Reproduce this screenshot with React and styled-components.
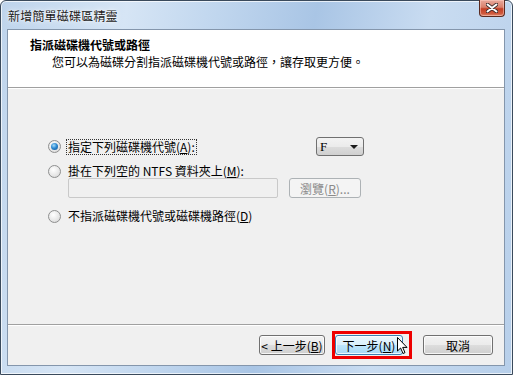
import React from 'react';
import styled, { createGlobalStyle } from 'styled-components';

const GlobalStyle = createGlobalStyle`
  html, body {
    margin: 0;
    padding: 0;
    background: #ffffff;
  }
  body {
    font-family: "Noto Sans CJK TC", "Liberation Sans", sans-serif;
    font-size: 12px;
    color: #000;
  }
`;

const Window = styled.div`
  position: relative;
  box-sizing: border-box;
  width: 513px;
  height: 375px;
  border: 1px solid #3a4a5c;
  border-radius: 6px 6px 0 0;
  background: linear-gradient(100deg, #bed4ec 0%, #d6e5f5 22%, #c0d6ee 38%, #a9c5e5 55%, #c9dcf1 75%, #b7cfea 100%);
  box-shadow: inset 0 0 0 1px rgba(255, 255, 255, 0.7);
  display: flex;
  flex-direction: column;
  padding: 0 7px 8px 6px;
`;

const TitleBar = styled.div`
  height: 28px;
  display: flex;
  align-items: center;
  padding-left: 1px;
`;

const Caption = styled.span`
  font-size: 12px;
  color: #1a1a1a;
  text-shadow: 0 0 6px rgba(255, 255, 255, 0.95), 0 0 2px #fff;
  letter-spacing: 0.2px;
`;

const CloseButton = styled.div`
  position: absolute;
  top: -1px;
  right: 7px;
  width: 26px;
  height: 17px;
  box-sizing: border-box;
  border: 1px solid #5a2a20;
  border-top: none;
  border-radius: 0 0 4px 4px;
  background: linear-gradient(#e9a99c 0%, #d9806c 45%, #c23e25 55%, #cf5a3d 85%, #e08f74 100%);
  box-shadow: inset 0 0 0 1px rgba(255, 210, 200, 0.5);
  display: flex;
  align-items: center;
  justify-content: center;
`;

const Client = styled.div`
  flex: 1;
  display: flex;
  flex-direction: column;
  background: #f0f0f0;
  border: 1px solid #8496ac;
`;

const Header = styled.div`
  height: 58px;
  box-sizing: border-box;
  background: #ffffff;
  border-bottom: 1px solid #a0a0a0;
  padding: 6px 0 0 22px;
  display: flex;
  flex-direction: column;
`;

const HeaderTitle = styled.div`
  font-weight: bold;
  font-size: 12px;
  line-height: 18px;
`;

const HeaderSub = styled.div`
  font-size: 12px;
  line-height: 16px;
  padding-left: 22px;
`;

const Body = styled.div`
  flex: 1;
  border-top: 1px solid #ffffff;
  padding: 48px 0 0 40px;
  display: flex;
  flex-direction: column;
`;

const OptionRow = styled.div`
  display: flex;
  align-items: center;
  height: ${({ $h }) => $h || 14}px;
  margin-top: ${({ $mt }) => $mt || 0}px;
`;

const Radio = styled.span`
  width: 13px;
  height: 13px;
  box-sizing: border-box;
  border-radius: 50%;
  border: 1px solid #8e8f8f;
  background: radial-gradient(circle at 40% 35%, #ffffff 0%, #e6e6e6 60%, #cfcfcf 100%);
  display: inline-flex;
  align-items: center;
  justify-content: center;
  margin-right: 5px;
  flex: none;

  &::after {
    content: '';
    display: ${({ $checked }) => ($checked ? 'block' : 'none')};
    width: 7px;
    height: 7px;
    border-radius: 50%;
    background: radial-gradient(circle at 40% 35%, #a8dcf8 0%, #2d8ad3 45%, #0d4c8a 100%);
  }
`;

const Label = styled.span`
  font-size: 12px;
  line-height: 14px;
  white-space: nowrap;
  padding: 0 1px;
  border: 1px dotted ${({ $focused }) => ($focused ? '#333' : 'transparent')};
`;

const Key = styled.span`
  text-decoration: underline;
`;

const Dropdown = styled.div`
  margin-left: auto;
  margin-right: 140px;
  width: 48px;
  height: 19px;
  box-sizing: border-box;
  border: 1px solid #707070;
  border-radius: 3px;
  background: linear-gradient(#f3f3f3 0%, #ebebeb 50%, #dcdcdc 51%, #d0d0d0 100%);
  display: flex;
  align-items: center;
  justify-content: space-between;
  padding: 0 5px 0 3px;
  font-family: "Liberation Serif", "Noto Sans CJK TC", serif;
  font-size: 13px;
`;

const Arrow = styled.span`
  width: 0;
  height: 0;
  border-left: 4px solid transparent;
  border-right: 4px solid transparent;
  border-top: 4px solid #1a1a1a;
`;

const PathRow = styled.div`
  display: flex;
  align-items: center;
  padding-left: 20px;
  gap: 11px;
`;

const PathInput = styled.div`
  width: 210px;
  height: 20px;
  box-sizing: border-box;
  border: 1px solid #c9c9c9;
  border-radius: 2px;
  background: #f0f0f0;
`;

const Button = styled.div`
  width: ${({ $w }) => $w || 66}px;
  height: 20px;
  box-sizing: border-box;
  border: 1px solid #707070;
  border-radius: 3px;
  background: linear-gradient(#f2f2f2 0%, #ebebeb 50%, #dddddd 51%, #cfcfcf 100%);
  box-shadow: inset 0 0 0 1px rgba(255, 255, 255, 0.8);
  display: flex;
  align-items: center;
  justify-content: center;
  font-size: 12px;
  white-space: nowrap;
`;

const DisabledButton = styled(Button)`
  border-color: #adb2b5;
  background: #f4f4f4;
  color: #8a8a8a;
  box-shadow: none;
`;

const HoverButton = styled(Button)`
  border-color: #3c7fb1;
  background: linear-gradient(#eaf6fd 0%, #d9f0fc 50%, #bee6fd 51%, #a7d9f5 100%);
`;

const Footer = styled.div`
  height: 41px;
  box-sizing: border-box;
  border-top: 1px solid #a0a0a0;
  box-shadow: inset 0 1px 0 #ffffff;
  display: flex;
  align-items: center;
  justify-content: flex-end;
  padding: 0 11px 0 0;
`;

const Highlight = styled.div`
  position: relative;
  border: 3px solid #ee0000;
  padding: 1px 6px 1px 0;
  margin: 0 11px 0 7px;
`;

const Cursor = styled.svg`
  position: absolute;
  left: 62px;
  top: 3px;
`;

const App = () => {
  return (
    <>
      <GlobalStyle />
      <Window>
        <TitleBar>
          <Caption>新增簡單磁碟區精靈</Caption>
        </TitleBar>
        <CloseButton>
          <svg width="12" height="10" viewBox="0 0 12 10">
            <path d="M1.5 1.5 L10.5 8.5 M10.5 1.5 L1.5 8.5" stroke="#3a2a2a" strokeWidth="3.6" strokeLinecap="round" />
            <path d="M1.5 1.5 L10.5 8.5 M10.5 1.5 L1.5 8.5" stroke="#ffffff" strokeWidth="2" strokeLinecap="round" />
          </svg>
        </CloseButton>
        <Client>
          <Header>
            <HeaderTitle>指派磁碟機代號或路徑</HeaderTitle>
            <HeaderSub>您可以為磁碟分割指派磁碟機代號或路徑，讓存取更方便。</HeaderSub>
          </Header>
          <Body>
            <OptionRow $h={19}>
              <Radio $checked />
              <Label $focused>指定下列磁碟機代號(<Key>A</Key>):</Label>
              <Dropdown>
                F<Arrow />
              </Dropdown>
            </OptionRow>
            <OptionRow $mt={8}>
              <Radio />
              <Label>掛在下列空的 NTFS 資料夾上(<Key>M</Key>):</Label>
            </OptionRow>
            <PathRow>
              <PathInput />
              <DisabledButton $w={72}>瀏覽(<Key>R</Key>)...</DisabledButton>
            </PathRow>
            <OptionRow $mt={11}>
              <Radio />
              <Label>不指派磁碟機代號或磁碟機路徑(<Key>D</Key>)</Label>
            </OptionRow>
          </Body>
          <Footer>
            <Button>&lt; 上一步(<Key>B</Key>)</Button>
            <Highlight>
              <HoverButton $w={68}>下一步(<Key>N</Key>)</HoverButton>
              <Cursor width="11" height="18" viewBox="0 0 11 18">
                <path d="M0.5 0.5 L0.5 14 L3.6 11 L6 16.5 L8 15.6 L5.7 10.4 L10 10.4 Z" fill="#ffffff" stroke="#000" strokeWidth="1" />
              </Cursor>
            </Highlight>
            <Button $w={70}>取消</Button>
          </Footer>
        </Client>
      </Window>
    </>
  );
};

export default App;
